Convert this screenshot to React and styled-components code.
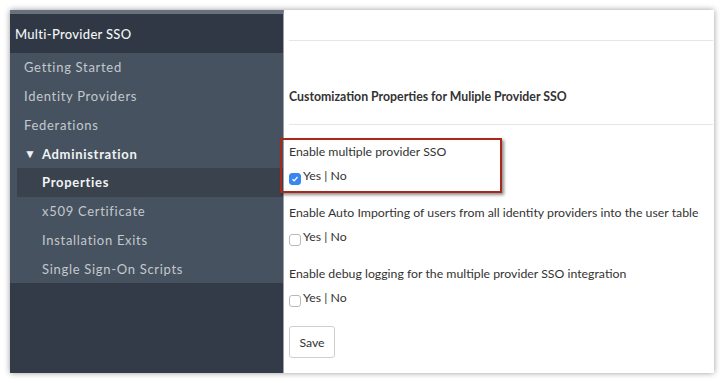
import React from "react";
import styled, { createGlobalStyle } from "styled-components";

const Global = createGlobalStyle`
  html, body { margin: 0; padding: 0; background: #ffffff; }
  body { font-family: "Lato", "Open Sans", sans-serif; }
`;

const Page = styled.div`
  width: 723px;
  height: 383px;
  padding: 10px 0 0 10px;
  box-sizing: border-box;
`;

const Frame = styled.div`
  width: 704px;
  height: 363px;
  display: flex;
  background: #fff;
  box-shadow: 0 0 6px rgba(0, 0, 0, 0.4);
  position: relative;
`;

const Sidebar = styled.aside`
  width: 273px;
  flex: none;
  display: flex;
  flex-direction: column;
  background: #323b47;
  border-top: 4px solid #68717c;
  border-right: 1px solid #9aa1a9;
`;

const SideHeader = styled.div`
  height: 39px;
  display: flex;
  align-items: center;
  padding-left: 5px;
  background: #2f3844;
  color: #f2f4f6;
  font-size: 13px;
  font-weight: 500;
  letter-spacing: 0.3px;
`;

const Nav = styled.ul`
  list-style: none;
  margin: 0;
  padding: 0;
  background: #46525f;
`;

const NavItem = styled.li`
  height: 28.75px;
  display: flex;
  align-items: center;
  margin-left: ${(p) => (p.$active ? "7px" : "0")};
  padding-left: ${(p) => (p.$sub ? (p.$active ? "25px" : "32px") : "14px")};
  background: ${(p) => (p.$active ? "#39424d" : "transparent")};
  color: ${(p) => (p.$active || p.$bold ? "#f1f3f5" : "#c3c8ce")};
  font-weight: ${(p) => (p.$active || p.$bold ? 700 : 400)};
  font-size: 13px;
  letter-spacing: 0.7px;
`;

const Caret = styled.span`
  font-size: 12px;
  margin-right: 6px;
  letter-spacing: 0;
`;

const Main = styled.main`
  flex: 1;
  padding: 0 1px 0 5px;
  color: #333;
  font-size: 12.3px;
`;

const TopBar = styled.div`
  height: 30px;
  border-bottom: 1px solid #e6e6e6;
`;

const TitleBlock = styled.div`
  padding: 47px 0 18px 0;
  border-bottom: 1px solid #e6e6e6;
`;

const Title = styled.h3`
  margin: 0;
  font-size: 12.3px;
  line-height: 18px;
  font-weight: 700;
  color: #333;
`;

const Form = styled.div`
  padding-top: 18px;
`;

const Field = styled.div`
  margin-bottom: 19px;
`;

const Label = styled.div`
  line-height: 18px;
`;

const Row = styled.label`
  margin-top: 6px;
  display: flex;
  align-items: center;
  line-height: 18px;
`;

const Box = styled.span`
  width: 12px;
  height: 12px;
  box-sizing: border-box;
  border-radius: 3px;
  margin: 5px 2px 0 0;
  display: inline-flex;
  align-items: center;
  justify-content: center;
  border: 1px solid ${(p) => (p.$checked ? "#3a86f0" : "#b9b9b9")};
  background: ${(p) => (p.$checked ? "#3a86f0" : "#fff")};
`;

const Button = styled.button`
  height: 32px;
  width: 46px;
  border: 1px solid #cfcfcf;
  border-radius: 3px;
  background: #fff;
  font-family: inherit;
  font-size: 12.3px;
  color: #333;
  padding: 0;
`;

const Highlight = styled.div`
  position: absolute;
  left: 270px;
  top: 128px;
  width: 218px;
  height: 51px;
  border: 2px solid #a8281c;
  box-shadow: 2px 2px 3px rgba(0, 0, 0, 0.45);
  pointer-events: none;
`;

function Check({ checked }) {
  return (
    <Box $checked={checked}>
      {checked && (
        <svg width="8" height="8" viewBox="0 0 8 8">
          <path d="M1.5 4.2 L3.2 5.8 L6.5 2" fill="none" stroke="#fff" strokeWidth="1.2" />
        </svg>
      )}
    </Box>
  );
}

const fields = [
  { label: "Enable multiple provider SSO", checked: true },
  { label: "Enable Auto Importing of users from all identity providers into the user table", checked: false },
  { label: "Enable debug logging for the multiple provider SSO integration", checked: false },
];

export default function App() {
  return (
    <Page>
      <Global />
      <Frame>
        <Sidebar>
          <SideHeader>Multi-Provider SSO</SideHeader>
          <Nav>
            <NavItem>Getting Started</NavItem>
            <NavItem>Identity Providers</NavItem>
            <NavItem>Federations</NavItem>
            <NavItem $bold>
              <Caret>▼</Caret>Administration
            </NavItem>
            <NavItem $sub $active>Properties</NavItem>
            <NavItem $sub>x509 Certificate</NavItem>
            <NavItem $sub>Installation Exits</NavItem>
            <NavItem $sub>Single Sign-On Scripts</NavItem>
          </Nav>
        </Sidebar>
        <Main>
          <TopBar />
          <TitleBlock>
            <Title>Customization Properties for Muliple Provider SSO</Title>
          </TitleBlock>
          <Form>
            {fields.map((f) => (
              <Field key={f.label}>
                <Label>{f.label}</Label>
                <Row>
                  <Check checked={f.checked} />
                  Yes | No
                </Row>
              </Field>
            ))}
            <Button>Save</Button>
          </Form>
        </Main>
        <Highlight />
      </Frame>
    </Page>
  );
}
